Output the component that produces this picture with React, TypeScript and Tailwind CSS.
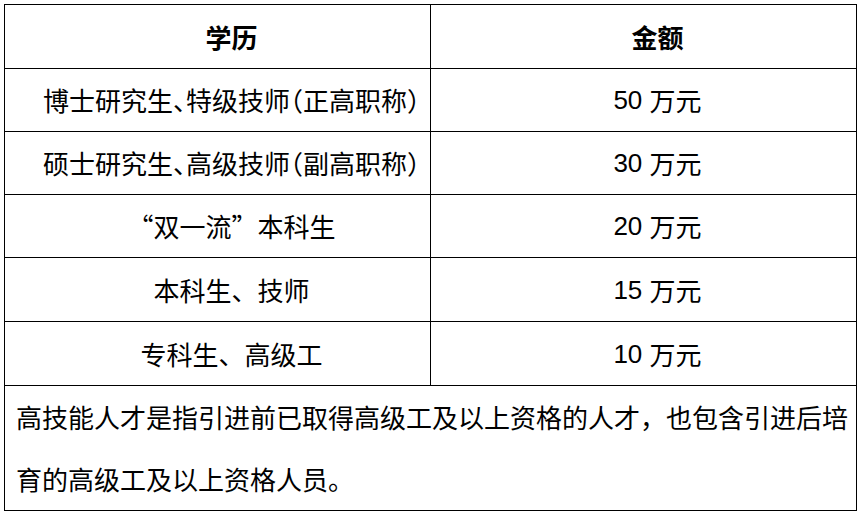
import React from 'react';

interface Row {
  degree: React.ReactNode;
  amount: string;
  height: string;
}

const cjk = "[font-family:'Noto_Sans_CJK_SC',sans-serif]";

// half-width punctuation, as in the first two rows of the source
function Half({ children }: { children: React.ReactNode }) {
  return <span className="[font-feature-settings:'halt']">{children}</span>;
}

const rows: Row[] = [
  {
    degree: (
      <>
        博士研究生<Half>、</Half>特级技师<Half>（</Half>正高职称<Half>）</Half>
      </>
    ),
    amount: '50',
    height: 'h-[63px]',
  },
  {
    degree: (
      <>
        硕士研究生<Half>、</Half>高级技师<Half>（</Half>副高职称<Half>）</Half>
      </>
    ),
    amount: '30',
    height: 'h-[63px]',
  },
  {
    degree: <span className="[font-feature-settings:'fwid']">“双一流”本科生</span>,
    amount: '20',
    height: 'h-[63px]',
  },
  { degree: '本科生、技师', amount: '15', height: 'h-[64px]' },
  { degree: '专科生、高级工', amount: '10', height: 'h-[64px]' },
];

function Cell({ children, left, className = '' }: { children: React.ReactNode; left?: boolean; className?: string }) {
  return (
    <div
      className={`flex items-center justify-center pl-[28px] whitespace-nowrap ${left ? 'border-r border-black' : ''} ${className}`}
    >
      {children}
    </div>
  );
}

export default function App() {
  return (
    <div className="min-h-[514px] bg-white pt-[4px] pl-[4px]">
      <div className={`w-[853px] border border-black text-[26px] leading-none text-black ${cjk}`}>
        {/* Header */}
        <div className="grid h-[64px] grid-cols-[426px_1fr] border-b border-black font-bold">
          <Cell left>学历</Cell>
          <Cell>金额</Cell>
        </div>

        {rows.map((row) => (
          <div key={row.amount} className={`grid grid-cols-[426px_1fr] border-b border-black ${row.height}`}>
            <Cell left>{row.degree}</Cell>
            <Cell>
              <span className="[font-family:'Liberation_Sans',sans-serif]">{row.amount}</span>
              <span className="[font-family:'Liberation_Sans',sans-serif]">&nbsp;</span>
              万元
            </Cell>
          </div>
        ))}

        {/* Note */}
        <div className="h-[124px] pl-[11px] pr-[6px] leading-[62px]">
          高技能人才是指引进前已取得高级工及以上资格的人才，也包含引进后培育的高级工及以上资格人员。
        </div>
      </div>
    </div>
  );
}
